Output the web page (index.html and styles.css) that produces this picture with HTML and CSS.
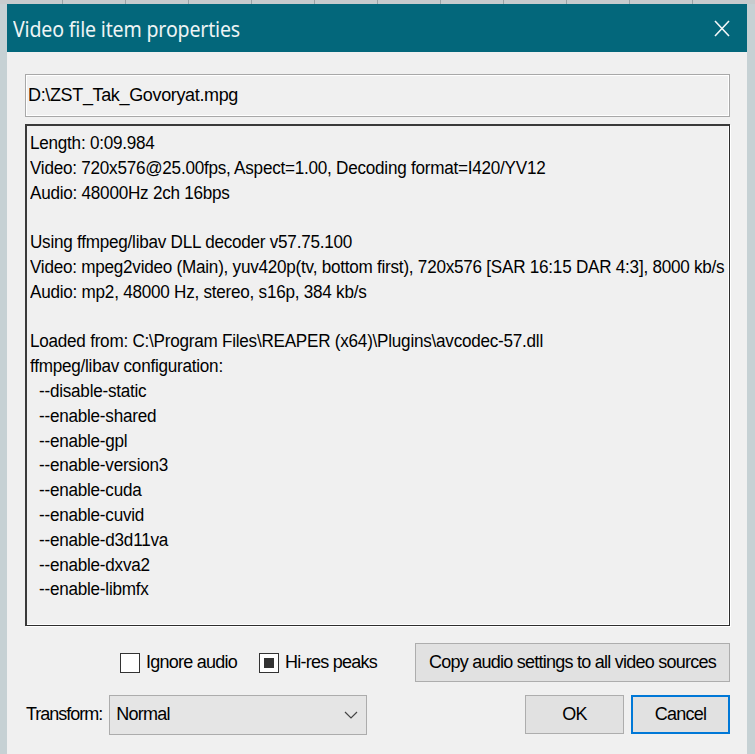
FILE: index.html
```html
<!DOCTYPE html>
<html>
<head>
<meta charset="utf-8">
<link rel="stylesheet" href="styles.css">
</head>
<body>
<div class="screen">
  <div class="topstrip"></div>
  <div class="frame">
    <div class="window">
      <div class="titlebar">
        <span class="title">Video file item properties</span>
        <svg class="close" width="16" height="17" viewBox="0 0 16 17"><path d="M1 1L15 16M15 1L1 16" stroke="#f2f6f7" stroke-width="1.6" fill="none"/></svg>
      </div>
      <div class="body">
        <div class="pathbox">D:\ZST_Tak_Govoryat.mpg</div>
        <div class="info"><div class="infotext">Length: 0:09.984
Video: 720x576@25.00fps, Aspect=1.00, Decoding format=I420/YV12
Audio: 48000Hz 2ch 16bps

Using ffmpeg/libav DLL decoder v57.75.100
Video: mpeg2video (Main), yuv420p(tv, bottom first), 720x576 [SAR 16:15 DAR 4:3], 8000 kb/s
Audio: mp2, 48000 Hz, stereo, s16p, 384 kb/s

Loaded from: C:\Program Files\REAPER (x64)\Plugins\avcodec-57.dll
ffmpeg/libav configuration:
  --disable-static
  --enable-shared
  --enable-gpl
  --enable-version3
  --enable-cuda
  --enable-cuvid
  --enable-d3d11va
  --enable-dxva2
  --enable-libmfx</div></div>
        <div class="row1">
          <label class="check"><span class="box"></span><span>Ignore audio</span></label>
          <label class="check checked"><span class="box"><span class="mark"></span></span><span>Hi-res peaks</span></label>
          <button class="btn copy">Copy audio settings to all video sources</button>
        </div>
        <div class="row2">
          <span class="lbl">Transform:</span>
          <div class="select"><span>Normal</span>
            <svg width="14" height="8" viewBox="0 0 14 8"><path d="M1 1L7 7L13 1" stroke="#444" stroke-width="1.2" fill="none"/></svg>
          </div>
          <div class="spacer"></div>
          <button class="btn ok">OK</button>
          <button class="btn cancel">Cancel</button>
        </div>
      </div>
    </div>
  </div>
</div>
</body>
</html>
```
FILE: styles.css
```css
html, body {
  margin: 0;
  padding: 0;
  background: #c4ced1;
}
.screen {
  width: 755px;
  height: 754px;
  display: flex;
  flex-direction: column;
  overflow: hidden;
}
.topstrip {
  height: 4px;
  background: repeating-linear-gradient(90deg, #c7cbcd 0 62px, #9aa2a5 62px 63px);
}
.frame {
  flex: 1;
  min-height: 0;
  display: flex;
  padding: 0 8px 0 7px;
  background: #c6d1d4;
}
.window {
  flex: 1;
  min-width: 0;
  display: flex;
  flex-direction: column;
  background: #f0f0f0;
}
.titlebar {
  height: 48px;
  background: #03677b;
  display: flex;
  align-items: center;
  justify-content: space-between;
  padding: 0 17px 0 6px;
}
.title {
  font-family: "Noto Sans", sans-serif;
  font-size: 22px;
  color: #eef4f5;
  letter-spacing: -0.2px;
  transform: scaleX(0.89);
  transform-origin: left center;
  white-space: nowrap;
}
.body {
  flex: 1;
  min-width: 0;
  display: flex;
  flex-direction: column;
  padding: 22px 17px 0 18px;
  font-family: "Liberation Sans", Arial, sans-serif;
  font-size: 18px;
  color: #000;
  letter-spacing: -0.75px;
}
.pathbox {
  height: 41px;
  border: 1px solid #a8a8a8;
  box-shadow: inset 1px 1px 0 #ffffff, inset -1px -1px 0 #ffffff;
  display: flex;
  align-items: center;
  padding-left: 2px;
  letter-spacing: -0.35px;
}
.info {
  margin-top: 7px;
  height: 494px;
  border-style: solid;
  border-width: 2px 1px 1px 2px;
  border-color: #3a3a3a #2e2e2e #2e2e2e #3a3a3a;
  box-shadow: inset -1px -1px 0 #ffffff, 1px 1px 0 #ffffff;
  padding: 5px 0 0 3px;
  overflow: hidden;
}
.infotext {
  white-space: pre;
  line-height: 24.8px;
  letter-spacing: -0.25px;
  transform: scaleX(0.95);
  transform-origin: left top;
}
.row1 {
  margin-top: 17px;
  height: 39px;
  display: flex;
  align-items: center;
}
.check {
  display: flex;
  align-items: center;
  gap: 6px;
  white-space: nowrap;
}
.check:first-child {
  margin-left: 95px;
}
.check + .check {
  margin-left: 22px;
}
.box {
  width: 18px;
  height: 18px;
  border: 1px solid #333;
  background: #ffffff;
  display: flex;
  align-items: center;
  justify-content: center;
}
.mark {
  width: 10px;
  height: 10px;
  background: #333;
}
.btn {
  font-family: "Liberation Sans", Arial, sans-serif;
  font-size: 18px;
  letter-spacing: -0.75px;
  color: #000;
  background: #e1e1e1;
  border: 1px solid #adadad;
  padding: 0;
  margin: 0;
  white-space: nowrap;
}
.copy {
  margin-left: auto;
  width: 315px;
  height: 39px;
}
.row2 {
  margin-top: 12px;
  height: 41px;
  display: flex;
  align-items: center;
}
.lbl {
  margin-left: 1px;
  letter-spacing: -1px;
  white-space: nowrap;
}
.select {
  margin-left: 7px;
  width: 258px;
  height: 40px;
  background: #e5e5e5;
  border: 1px solid #acacac;
  display: flex;
  align-items: center;
  justify-content: space-between;
  padding: 0 8px 0 6px;
  box-sizing: border-box;
}
.spacer {
  flex: 1;
}
.ok {
  width: 99px;
  height: 39px;
}
.cancel {
  margin-left: 7px;
  width: 99px;
  height: 39px;
  border: 2px solid #0078d7;
}
```
